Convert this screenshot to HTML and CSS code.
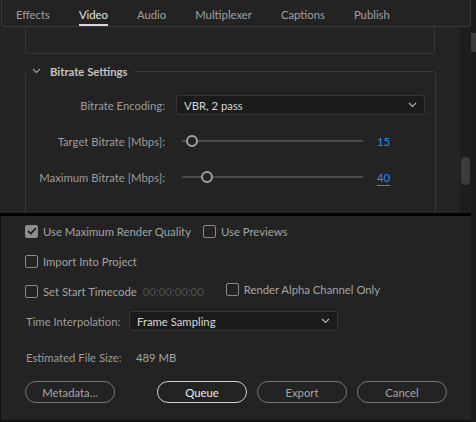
FILE: index.html
```html
<!DOCTYPE html>
<html lang="en">
<head>
    <meta charset="UTF-8">
    <title>Export Settings</title>
    <link rel="stylesheet" href="styles.css">
</head>
<body>
    <div class="window">
        <div class="main">
            <div class="upper">
                <nav class="tabs">
                    <span class="tab">Effects</span>
                    <span class="tab active">Video</span>
                    <span class="tab">Audio</span>
                    <span class="tab">Multiplexer</span>
                    <span class="tab">Captions</span>
                    <span class="tab">Publish</span>
                </nav>
                <div class="scroll">
                    <div class="content">
                        <div class="prev-box"></div>

                        <fieldset class="section">
                            <legend>
                                <svg class="chev" width="9" height="6" viewBox="0 0 9 6"><path d="M1 1 L4.5 4.5 L8 1" fill="none" stroke="#9a9a9a" stroke-width="1.2"/></svg>
                                Bitrate Settings
                            </legend>
                            <div class="row">
                                <label>Bitrate Encoding:</label>
                                <div class="select wide">
                                    <span>VBR, 2 pass</span>
                                    <svg width="9" height="6" viewBox="0 0 9 6"><path d="M1 1 L4.5 4.5 L8 1" fill="none" stroke="#b0b0b0" stroke-width="1.2"/></svg>
                                </div>
                            </div>
                            <div class="row">
                                <label>Target Bitrate [Mbps]:</label>
                                <div class="slider">
                                    <div class="track"><span class="knob" style="left: 9px"></span></div>
                                    <span class="value">15</span>
                                </div>
                            </div>
                            <div class="row">
                                <label>Maximum Bitrate [Mbps]:</label>
                                <div class="slider">
                                    <div class="track"><span class="knob" style="left: 24px"></span></div>
                                    <span class="value underline">40</span>
                                </div>
                            </div>
                        </fieldset>
                    </div>
                    <div class="scrollbar"><span class="thumb"></span></div>
                </div>
            </div>

            <div class="lower">
                <div class="line">
                    <span class="check checked">
                        <svg width="10" height="8" viewBox="0 0 10 8"><path d="M1 4 L3.8 6.6 L9 1.2" fill="none" stroke="#1f1f1f" stroke-width="1.8"/></svg>
                    </span>
                    <span class="text">Use Maximum Render Quality</span>
                    <span class="check gap"></span>
                    <span class="text">Use Previews</span>
                </div>
                <div class="line">
                    <span class="check"></span>
                    <span class="text">Import Into Project</span>
                </div>
                <div class="line">
                    <span class="check"></span>
                    <span class="text">Set Start Timecode</span>
                    <span class="timecode">00:00:00:00</span>
                    <span class="check alpha"></span>
                    <span class="text raise">Render Alpha Channel Only</span>
                </div>
                <div class="line">
                    <span class="label">Time Interpolation:</span>
                    <div class="select short">
                        <span>Frame Sampling</span>
                        <svg width="9" height="6" viewBox="0 0 9 6"><path d="M1 1 L4.5 4.5 L8 1" fill="none" stroke="#b0b0b0" stroke-width="1.2"/></svg>
                    </div>
                </div>
                <div class="line size">
                    <span class="label">Estimated File Size:</span>
                    <span class="text">489 MB</span>
                </div>
                <div class="buttons">
                    <button>Metadata...</button>
                    <button class="primary">Queue</button>
                    <button>Export</button>
                    <button>Cancel</button>
                </div>
            </div>
        </div>
        <div class="edge"><span class="edge-thumb"></span></div>
    </div>
</body>
</html>
```

FILE: styles.css
```css
html, body {
    margin: 0;
    padding: 0;
    background: #1a1a1a;
}
body {
    font-family: Lato, "Noto Sans", sans-serif;
    font-size: 11.3px;
    color: #a3a3a3;
}
.window {
    width: 476px;
    height: 422px;
    display: flex;
    overflow: hidden;
}
.main {
    width: 471px;
    display: flex;
    flex-direction: column;
    background: #232323;
}
.upper {
    height: 213px;
    display: flex;
    flex-direction: column;
    border-bottom: 3px solid #000;
}
.tabs {
    height: 27px;
    box-sizing: border-box;
    border: 1px solid #393939;
    border-top: none;
    border-radius: 0 0 4px 4px;
    margin: 0 0 0 1px;
    display: flex;
    align-items: center;
    padding-left: 14px;
}
.tab {
    margin-right: 29px;
    color: #a0a0a0;
    font-size: 11.3px;
    position: relative;
    top: 1px;
}
.tab.active {
    color: #e6e6e6;
}
.tab.active::after {
    content: "";
    position: absolute;
    left: 0;
    right: 0;
    bottom: -5px;
    height: 2px;
    background: #d8d8d8;
}
.scroll {
    flex: 1;
    display: flex;
    overflow: hidden;
}
.content {
    width: 459px;
}
.prev-box {
    margin-left: 25px;
    width: 410px;
    height: 27px;
    box-sizing: border-box;
    border: 1px solid #383838;
    border-top: none;
    border-radius: 0 0 3px 3px;
}
.section {
    margin: 11px 0 0 25px;
    width: 410px;
    height: 149px;
    box-sizing: border-box;
    border: 1px solid #383838;
    border-radius: 3px;
    padding: 0 10px 0 0;
}
.section legend {
    padding: 0 6px 0 5px;
    margin-left: 1px;
    font-weight: bold;
    color: #c4c4c4;
    display: flex;
    align-items: center;
    gap: 9px;
}
.chev {
    margin-top: -2px;
}
.row {
    display: flex;
    align-items: center;
    height: 36px;
}
.row:first-of-type {
    margin-top: 9px;
}
.row label {
    width: 139px;
    text-align: right;
    color: #9c9c9c;
    margin-right: 11px;
    white-space: nowrap;
}
.select {
    height: 20px;
    box-sizing: border-box;
    background: #1b1b1b;
    border: 1px solid #363636;
    border-radius: 3px;
    display: flex;
    align-items: center;
    justify-content: space-between;
    padding: 0 7px 0 7px;
    color: #d6d6d6;
}
.select.wide {
    width: 249px;
}
.slider {
    display: flex;
    align-items: center;
    width: 240px;
}
.track {
    position: relative;
    margin-left: 6px;
    width: 181px;
    height: 2px;
    background: #4a4a4a;
}
.knob {
    position: absolute;
    top: -5px;
    width: 8px;
    height: 8px;
    margin-left: -5px;
    border: 2px solid #a0a0a0;
    border-radius: 50%;
    background: #232323;
}
.value {
    margin-left: 14px;
    color: #2d8ceb;
}
.value.underline {
    text-decoration: underline;
    text-underline-offset: 3px;
}
.scrollbar {
    width: 11px;
    margin-left: 1px;
    background: #1e1e1e;
    display: flex;
    flex-direction: column;
}
.thumb {
    margin: 130px 1px 0 1px;
    height: 28px;
    border-radius: 5px;
    background: #3c3c3c;
}
.lower {
    flex: 1;
    padding: 0 0 0 24px;
    display: flex;
    flex-direction: column;
    border-left: 1px solid #111;
    border-bottom: 2px solid #111;
}
.line {
    display: flex;
    align-items: center;
    height: 30px;
}
.check {
    width: 11px;
    height: 11px;
    border: 1px solid #8a8a8a;
    border-radius: 2px;
    display: flex;
    align-items: center;
    justify-content: center;
}
.check.checked {
    background: #8e8e8e;
}
.check.gap {
    margin-left: 12px;
}
.check.alpha {
    margin-left: 22px;
    margin-top: -4px;
}
.text {
    margin-left: 5px;
    color: #a3a3a3;
}
.text.raise {
    margin-top: -4px;
}
.timecode {
    margin-left: 6px;
    color: #4f4f4f;
}
.label {
    width: 103px;
    padding-left: 1px;
    color: #9a9a9a;
    white-space: nowrap;
}
.select.short {
    width: 209px;
}
.size {
    margin-top: 6px;
}
.size .text {
    margin-left: 7px;
}
.buttons {
    display: flex;
    margin-top: 9px;
    gap: 10px;
}
button {
    font-family: inherit;
    font-size: 11.3px;
    width: 90px;
    height: 22px;
    border: 1px solid #777;
    border-radius: 11px;
    background: transparent;
    color: #a3a3a3;
    padding: 0;
}
button.primary {
    margin-left: 32px;
    border-color: #d0d0d0;
    color: #ececec;
}
.edge {
    flex: 1;
    background: #1b1b1b;
    display: flex;
    flex-direction: column;
}
.edge-thumb {
    margin-top: 33px;
    height: 19px;
    background: #3b3b3b;
}
```
